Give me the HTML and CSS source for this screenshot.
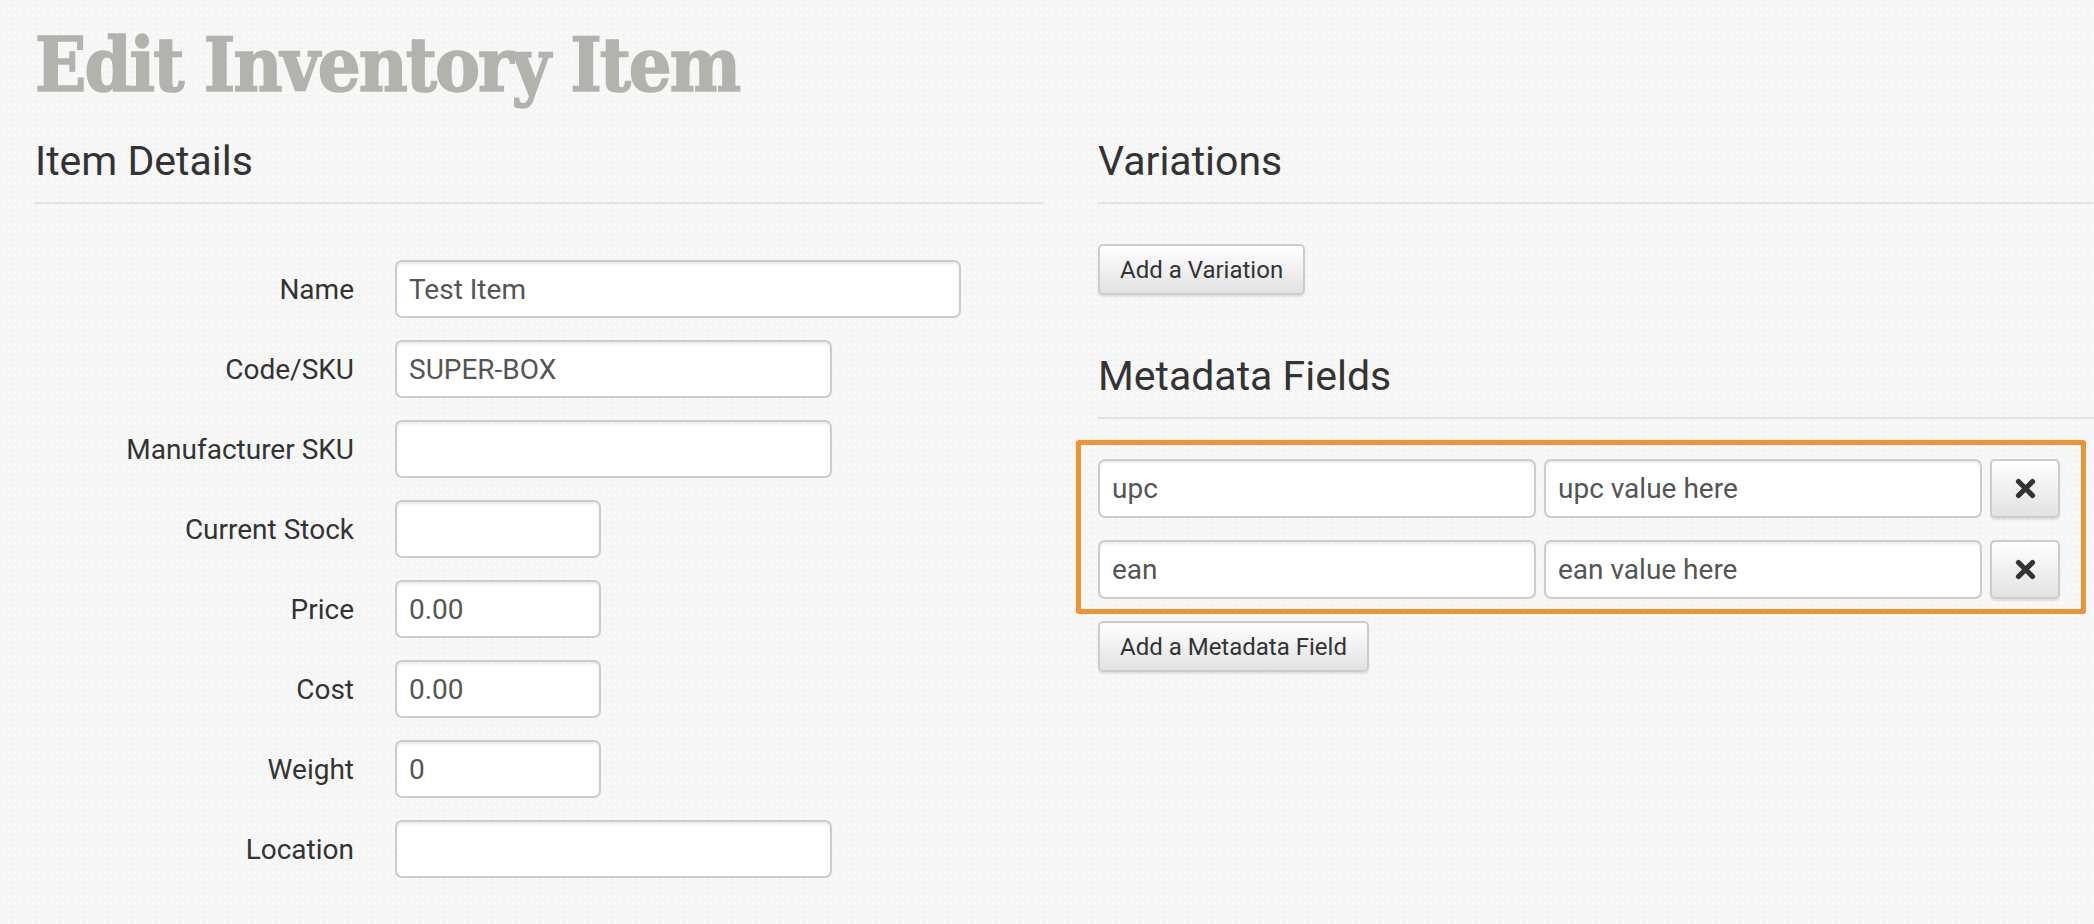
FILE: index.html
```html
<!DOCTYPE html>
<html lang="en">
<head>
    <meta charset="UTF-8">
    <title>Edit Inventory Item</title>
    <link rel="stylesheet" href="styles.css">
</head>
<body>
    <div class="page">
        <h1 class="page-title">Edit Inventory Item</h1>

        <div class="columns">
            <section class="col">
                <h2 class="section-header">Item Details</h2>
                <form class="item-form">
                    <div class="form-row">
                        <label>Name</label>
                        <input type="text" class="input-wide" value="Test Item">
                    </div>
                    <div class="form-row">
                        <label>Code/SKU</label>
                        <input type="text" class="input-mid" value="SUPER-BOX">
                    </div>
                    <div class="form-row">
                        <label>Manufacturer SKU</label>
                        <input type="text" class="input-mid" value="">
                    </div>
                    <div class="form-row">
                        <label>Current Stock</label>
                        <input type="text" class="input-small" value="">
                    </div>
                    <div class="form-row">
                        <label>Price</label>
                        <input type="text" class="input-small" value="0.00">
                    </div>
                    <div class="form-row">
                        <label>Cost</label>
                        <input type="text" class="input-small" value="0.00">
                    </div>
                    <div class="form-row">
                        <label>Weight</label>
                        <input type="text" class="input-small" value="0">
                    </div>
                    <div class="form-row">
                        <label>Location</label>
                        <input type="text" class="input-mid" value="">
                    </div>
                </form>
            </section>

            <section class="col">
                <h2 class="section-header">Variations</h2>
                <button class="btn btn-variation">Add a Variation</button>

                <h2 class="section-header">Metadata Fields</h2>
                <div class="meta-box">
                    <div class="meta-row">
                        <input type="text" value="upc">
                        <input type="text" value="upc value here">
                        <button class="btn btn-remove" title="Remove">
                            <svg width="21" height="21" viewBox="0 0 21 21"><path d="M3.5 3.5 L17.5 17.5 M17.5 3.5 L3.5 17.5" stroke="#333" stroke-width="5.2" stroke-linecap="round"/></svg>
                        </button>
                    </div>
                    <div class="meta-row">
                        <input type="text" value="ean">
                        <input type="text" value="ean value here">
                        <button class="btn btn-remove" title="Remove">
                            <svg width="21" height="21" viewBox="0 0 21 21"><path d="M3.5 3.5 L17.5 17.5 M17.5 3.5 L3.5 17.5" stroke="#333" stroke-width="5.2" stroke-linecap="round"/></svg>
                        </button>
                    </div>
                </div>
                <button class="btn btn-add-meta">Add a Metadata Field</button>
            </section>
        </div>
    </div>
</body>
</html>
```

FILE: styles.css
```css
html, body {
    margin: 0;
    padding: 0;
}
body {
    font-family: Roboto, "Liberation Sans", sans-serif;
    color: #333;
    background-color: #f6f6f6;
    background-image: radial-gradient(circle, #fcfcfc 1px, transparent 1.6px);
    background-size: 6px 6px;
    overflow: hidden;
    height: 924px;
}
.page {
    padding: 0 0 0 35px;
}
.page-title {
    font-family: "DejaVu Serif", "Liberation Serif", serif;
    font-stretch: condensed;
    font-weight: bold;
    font-size: 75px;
    line-height: 75px;
    letter-spacing: -2px;
    color: #b3b2ad;
    -webkit-text-stroke: 1.5px #b3b2ad;
    margin: 0;
    padding-top: 28px;
}
.columns {
    display: grid;
    grid-template-columns: 1008px 1008px;
    column-gap: 55px;
    margin-top: 36px;
}
.section-header {
    font-size: 41px;
    font-weight: 400;
    line-height: 45px;
    margin: 0;
    padding-bottom: 18px;
    border-bottom: 2px solid #e3e3e3;
}
.item-form {
    padding-top: 56px;
}
.form-row {
    display: flex;
    align-items: center;
    gap: 41px;
    margin-bottom: 22px;
}
.form-row label {
    width: 319px;
    text-align: right;
    font-size: 28px;
}
input[type="text"] {
    box-sizing: border-box;
    height: 58px;
    padding: 0 12px;
    font-family: Roboto, "Liberation Sans", sans-serif;
    font-size: 28px;
    color: #555;
    background: #fff;
    border: 2px solid #ccc;
    border-radius: 7px;
    box-shadow: inset 0 2px 2px rgba(0,0,0,0.08);
    outline: none;
}
.input-wide {
    width: 566px;
}
.input-mid {
    width: 437px;
}
.input-small {
    width: 206px;
}
.btn {
    box-sizing: border-box;
    font-family: Roboto, "Liberation Sans", sans-serif;
    font-size: 24px;
    color: #333;
    background: linear-gradient(#fff, #e2e2e2);
    border: 2px solid #ccc;
    border-radius: 5px;
    box-shadow: 0 2px 2px rgba(0,0,0,0.1);
    padding: 0 20px;
    height: 51px;
    cursor: pointer;
}
.btn-variation {
    margin: 40px 0 59px;
}
.meta-box {
    width: 1010px;
    box-sizing: border-box;
    margin: 21px 0 0 -22px;
    padding: 14px 19px 10px 17px;
    border: 5px solid #ef9433;
    border-radius: 3px;
}
.meta-row {
    display: grid;
    grid-template-columns: 438px 438px 70px;
    column-gap: 8px;
    margin-bottom: 22px;
}
.meta-row:last-child {
    margin-bottom: 0;
}
.meta-row input[type="text"] {
    width: 100%;
    height: 59px;
}
.btn-remove {
    height: 59px;
    padding: 0;
    display: flex;
    align-items: center;
    justify-content: center;
}
.btn-add-meta {
    margin-top: 7px;
}
```
